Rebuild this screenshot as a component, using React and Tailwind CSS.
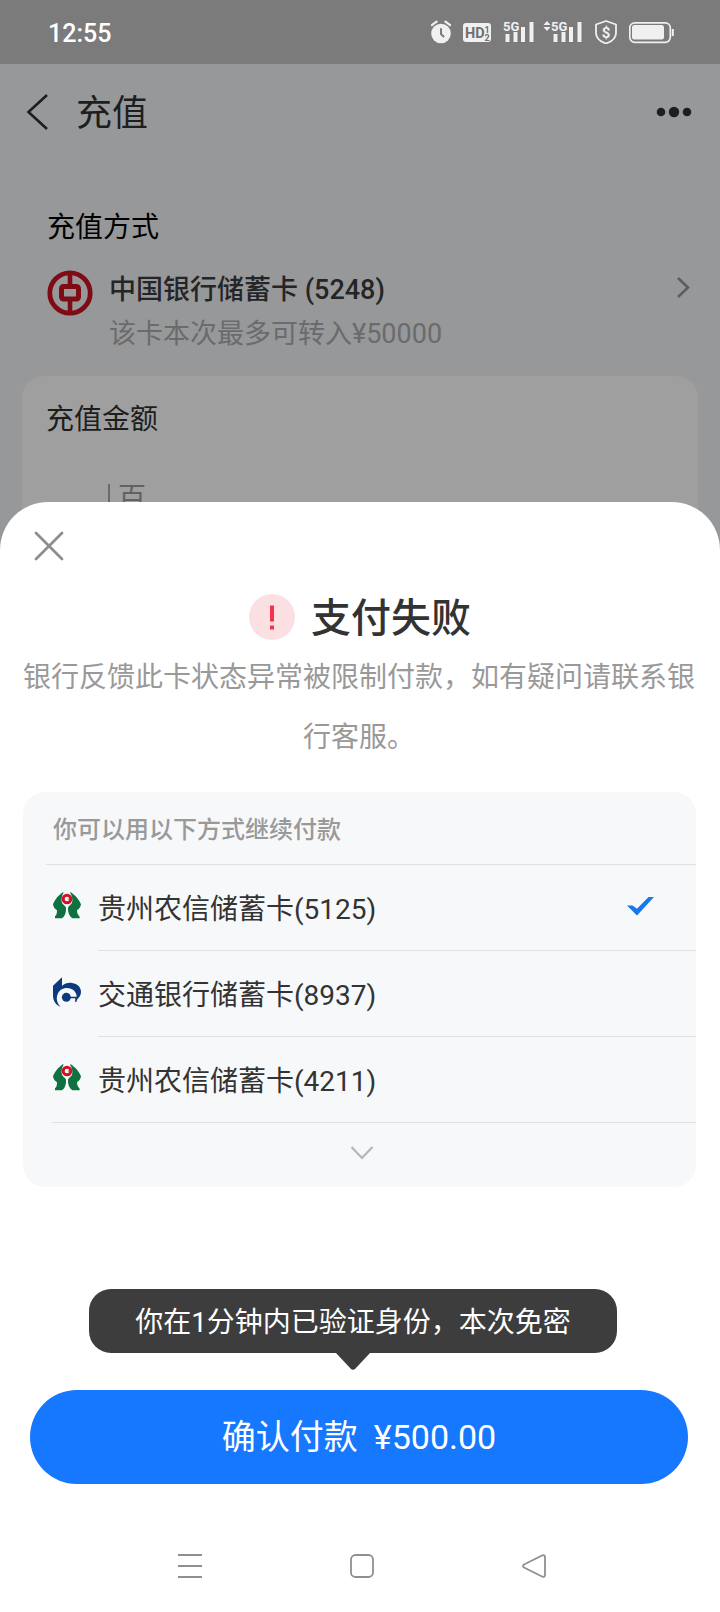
import { useState } from "react";

function AlarmIcon() {
  return (
    <svg className="h-6 w-5" viewBox="0 0 20 24" fill="none" aria-hidden="true">
      <circle cx="10" cy="13.5" r="9.8" fill="#f0f0f0" />
      <path d="M0.8 5.2 5.6 1.6M19.2 5.2 14.4 1.6" stroke="#f0f0f0" strokeWidth="2.2" strokeLinecap="round" />
      <path d="M10 9V14l2.5 2.500" stroke="#7b7b7b" strokeWidth="2" strokeLinecap="round" strokeLinejoin="round" />
    </svg>
  );
}

function HdIcon() {
  return (
    <svg className="h-6 w-7" viewBox="0 0 28 24" aria-hidden="true" fontFamily="Roboto, sans-serif" fontWeight="700" fill="#6f6f6f">
      <rect x="0" y="3" width="28" height="19" rx="3" fill="#f0f0f0" />
      <text x="2" y="18" fontSize="14.500">HD</text>
      <text x="21.500" y="12.500" fontSize="9">1</text>
      <text x="21.500" y="20.500" fontSize="9">2</text>
    </svg>
  );
}

function SignalBars() {
  return (
    <svg className="h-6 w-8 overflow-visible" viewBox="0 0 32 24" aria-hidden="true" fill="#f0f0f0">
      <text x="0" y="11" fontSize="13" fontFamily="Roboto, sans-serif" fontWeight="700">5G</text>
      <rect x="2.5" y="14" width="4" height="8" />
      <rect x="10.5" y="12" width="4" height="10" />
      <rect x="18" y="7" width="4" height="15" />
      <rect x="26.5" y="2" width="4" height="20" />
    </svg>
  );
}

function DataArrows() {
  return (
    <svg className="h-6 w-2" viewBox="0 0 8 24" aria-hidden="true" fill="#f0f0f0">
      <path d="M0.500 5 4 1l3.500 4zM0.500 7 4 11l3.500-4z" />
    </svg>
  );
}

function ShieldIcon() {
  return (
    <svg className="h-6 w-[22px]" viewBox="1 0 22 24" aria-hidden="true" fill="none">
      <path d="M12 1 22 4.500V13c0 5-4 8.500-10 10.500C6 21.500 2 18 2 13V4.500z" stroke="#f0f0f0" strokeWidth="1.800" strokeLinejoin="round" />
      <text x="12" y="17.500" fontSize="15" fontFamily="Roboto, sans-serif" fontWeight="700" fill="#f0f0f0" textAnchor="middle">$</text>
    </svg>
  );
}

function BatteryIcon() {
  return (
    <svg className="h-6 w-[45px]" viewBox="0 0 45 24" aria-hidden="true" fill="none">
      <rect x="0.800" y="2.800" width="40.500" height="19.500" rx="5" stroke="#f0f0f0" strokeWidth="1.700" />
      <rect x="3" y="5" width="32" height="14.500" rx="2.500" fill="#f0f0f0" />
      <path d="M43.800 9v7" stroke="#f0f0f0" strokeWidth="2" />
    </svg>
  );
}

function BankOfChinaLogo() {
  return (
    <svg className="h-[46px] w-[46px]" viewBox="0 0 46 46" fill="none" stroke="#7f0c14" aria-hidden="true">
      <circle cx="23" cy="23" r="20.200" strokeWidth="4.800" />
      <rect x="14.500" y="16.500" width="17" height="12.500" rx="2" strokeWidth="5" />
      <path d="M23 3v12M23 31v12" strokeWidth="4.600" />
    </svg>
  );
}

function GuizhouLogo() {
  return (
    <svg className="h-7 w-7" viewBox="0 0 84 84" aria-hidden="true">
      <path
        d="M30 1C20 7 7 20 0 37c1 8 5 13 12 18 0 9-1 14-6 18v6h21c9-7 13-18 12-32-2-7-10-9-12-15-3-10-1-21 5-30z"
        fill="#0f7040"
      />
      <path
        d="M53 1c10 6 24 19 31 36-1 8-5 13-12 18 0 9 3 14 8 19v5H58c-9-7-14-18-13-32 2-7 10-9 12-15 3-10 0-21-6-30z"
        fill="#0f7040"
      />
      <circle cx="42" cy="21" r="11.500" fill="#fff" stroke="#d01228" strokeWidth="9" />
      <path d="M44 21h5" stroke="#d01228" strokeWidth="2.500" />
    </svg>
  );
}

function BocomLogo() {
  return (
    <svg className="h-[30px] w-7" viewBox="0 0 84 88" fill="#0b3a7e" aria-hidden="true">
      <path d="M0 25 27 0v26c8-7 19-11 30-9 17 2 27 13 27 27 0 9-5 17-13 23 2-13-3-25-14-31-17-9-38-2-44 17-4 13 0 26 10 35C9 84 0 71 0 54z" />
      <circle cx="40" cy="60" r="13.500" />
      <path d="M46 58h29l-5 16-4-1 1-10H46z" />
    </svg>
  );
}

const methods = [
  { id: "5125", label: "贵州农信储蓄卡(5125)", Logo: GuizhouLogo },
  { id: "8937", label: "交通银行储蓄卡(8937)", Logo: BocomLogo },
  { id: "4211", label: "贵州农信储蓄卡(4211)", Logo: GuizhouLogo },
];

function StatusBar() {
  return (
    <div className="flex h-16 items-center justify-between bg-[#7b7b7b] pl-12 pr-[46px]">
      <span className="pt-1 text-[25px] font-medium leading-8 text-white">12:55</span>
      <div className="flex items-center gap-3">
        <AlarmIcon />
        <HdIcon />
        <SignalBars />
        <div className="-ml-1 flex">
          <DataArrows />
          <SignalBars />
        </div>
        <ShieldIcon />
        <BatteryIcon />
      </div>
    </div>
  );
}

function RechargePage() {
  return (
    <div className="bg-[#979899]">
      <StatusBar />
      <header className="flex h-24 items-center pl-6 pr-7">
        <button type="button" aria-label="返回" className="flex">
          <svg className="h-9 w-6" viewBox="0 0 24 36" fill="none" stroke="#1d1e20" strokeWidth="2.600">
            <path d="M23 1 4.500 18 23 35" />
          </svg>
        </button>
        <h1 className="ml-7 pt-1 text-[36px] leading-[48px] text-[#1d1e20]">充值</h1>
        <button type="button" aria-label="更多" className="ml-auto flex">
          <svg className="h-3 w-9" viewBox="0 0 36 12" fill="#1d1e20">
            <circle cx="5" cy="6" r="4.300" />
            <circle cx="18" cy="6" r="5.200" />
            <circle cx="31" cy="6" r="4.300" />
          </svg>
        </button>
      </header>

      <section className="pl-[47px] pr-7 pt-12">
        <h2 className="text-[28px] leading-10 text-black">充值方式</h2>
        <button type="button" className="mt-5 flex w-full items-start text-left">
          <span className="mt-[2px] flex">
            <BankOfChinaLogo />
          </span>
          <span className="ml-4 flex flex-col">
            <span className="text-[27px] font-medium leading-[44px] text-[#242527]">中国银行储蓄卡 (5248)</span>
            <span className="text-[27px] leading-[44px] text-[#6a6b6c]">该卡本次最多可转入¥50000</span>
          </span>
          <svg className="ml-auto mt-2 h-6 w-4" viewBox="0 0 16 24" fill="none" stroke="#5c5d5f" strokeWidth="2.600" aria-hidden="true">
            <path d="M2 2 12 11.500 2 21" />
          </svg>
        </button>
      </section>

      <section className="mx-[22px] mt-5 h-44 rounded-t-[22px] bg-[#9f9f9f] px-6 pt-6">
        <label htmlFor="amount" className="block text-[28px] leading-10 text-[#1d1d1d]">充值金额</label>
        <div className="mt-11 flex items-center pl-[62px]">
          <span className="flex h-7 border-l-2 border-[#6a6a6a] pl-2">
            <input
              id="amount"
              type="text"
              placeholder="百"
              className="h-7 w-40 bg-transparent text-[28px] leading-7 outline-none placeholder:text-[#626262]"
            />
          </span>
        </div>
      </section>
    </div>
  );
}

function MethodList() {
  const [selected, setSelected] = useState("5125");
  return (
    <div role="radiogroup" aria-label="付款方式" className="ml-[23px] mr-6 mt-6 rounded-[22px] bg-[#f7f8fa]">
      <div className="ml-[23px] border-b border-[#dfe1e4] pl-[7px]">
        <p className="pb-[14px] pt-[18px] text-[24px] font-medium leading-10 text-[#999999]">你可以用以下方式继续付款</p>
      </div>
      {methods.map(({ id, label, Logo }, i) => (
        <label key={id} className={i === 2 ? "relative ml-[29px] flex h-[86px] border-b border-[#dfe1e4]" : "relative ml-[29px] flex h-[86px]"}>
          <input
            type="radio"
            name="method"
            className="absolute h-full w-full cursor-pointer opacity-0"
            checked={selected === id}
            onChange={() => setSelected(id)}
          />
          <span className="flex w-[46px] items-center pb-1 pl-px">
            <Logo />
          </span>
          <span className={i === 2 ? "flex flex-1 items-center pr-[42px]" : "flex flex-1 items-center border-b border-[#dfe1e4] pr-[42px]"}>
            <span className="pt-1 text-[28px] leading-10 text-[#333333]">{label}</span>
            {selected === id && (
              <svg className="mb-1 ml-auto h-5 w-7" viewBox="0 0 28 20" aria-hidden="true" fill="#1677f0">
                <path d="M1 9.500h5.500l4.500 3.300L22.500 1H28L11 19.500z" />
              </svg>
            )}
          </span>
        </label>
      ))}
      <button type="button" aria-label="展开更多" className="flex h-16 w-full items-center justify-center pb-1 pl-1">
        <svg className="h-4 w-6" viewBox="0 0 24 16" fill="none" stroke="#b4b6ba" strokeWidth="2.200">
          <path d="M1.500 2 12 13 22.500 2" />
        </svg>
      </button>
    </div>
  );
}

function PaymentSheet() {
  return (
    <section role="dialog" aria-label="支付失败" className="relative -mt-[50px] flex grow flex-col rounded-t-[48px] bg-white pt-7">
      <button type="button" aria-label="关闭" className="ml-[33px] flex self-start">
        <svg className="h-8 w-8" viewBox="0 0 32 32" fill="none" stroke="#8e8e8e" strokeWidth="2.800" strokeLinecap="round">
          <path d="M3 3 29 29M29 3 3 29" />
        </svg>
      </button>

      <div className="mt-6 flex items-center justify-center gap-4">
        <svg className="h-[46px] w-[46px]" viewBox="0 0 46 46" aria-hidden="true">
          <circle cx="23" cy="23" r="23" fill="#fbe0e3" />
          <path d="M21 11.500h4v16h-4zM21 31.500h4v4h-4z" fill="#f5324a" />
        </svg>
        <h2 className="pt-1 text-[40px] font-medium leading-[58px] text-[#333333]">支付失败</h2>
      </div>
      <p className="pl-5 pr-[22px] text-center text-[28px] leading-[60px] text-[#999999]">
        银行反馈此卡状态异常被限制付款，如有疑问请联系银行客服。
      </p>

      <MethodList />

      <div className="mt-[102px] flex flex-col items-center pl-[30px] pr-8">
        <div className="mr-3 flex flex-col items-center">
          <div role="status" className="rounded-[22px] bg-[#3d3d3d] px-[46px] pb-[10px] pt-[14px] text-[28px] leading-10 text-white">
            你在1分钟内已验证身份，本次免密
          </div>
          <svg className="h-[18px] w-9" viewBox="0 0 36 18" fill="#3d3d3d" aria-hidden="true">
            <path d="M1 0h34L20.500 15.500q-2.500 2.500-5 0z" />
          </svg>
        </div>
        <button type="button" className="mt-[19px] h-[94px] w-full rounded-full bg-[#1677ff] text-[34px] leading-[48px] text-white">
          <span>确认付款</span>
          <span className="ml-4">¥500.00</span>
        </button>
      </div>

      <nav className="mt-auto flex items-center justify-center gap-[148px] pb-[34px] pl-1 pt-[70px]">
        <button type="button" aria-label="最近任务" className="flex">
          <svg className="h-6 w-6" viewBox="0 0 24 24" stroke="#8f8f8f" strokeWidth="2">
            <path d="M0 1h24M0 12h24M0 23h24" />
          </svg>
        </button>
        <button type="button" aria-label="主屏幕" className="flex">
          <svg className="h-6 w-6" viewBox="0 0 24 24" fill="none" stroke="#8f8f8f" strokeWidth="1.800">
            <rect x="1" y="1" width="22" height="22" rx="4.500" />
          </svg>
        </button>
        <button type="button" aria-label="返回上一页" className="flex">
          <svg className="h-6 w-6" viewBox="0 0 24 24" fill="none" stroke="#8f8f8f" strokeWidth="1.800" strokeLinejoin="round">
            <path d="M20.500 1.300 2 10.500q-2 1.500 0 3l18.500 9.200q2.500.6 2.500-2V3.300q0-2.600-2.500-2z" />
          </svg>
        </button>
      </nav>
    </section>
  );
}

export default function App() {
  return (
    <main className="flex min-h-screen flex-col bg-white font-[Roboto,'Noto_Sans_CJK_SC',sans-serif]">
      <RechargePage />
      <PaymentSheet />
    </main>
  );
}
